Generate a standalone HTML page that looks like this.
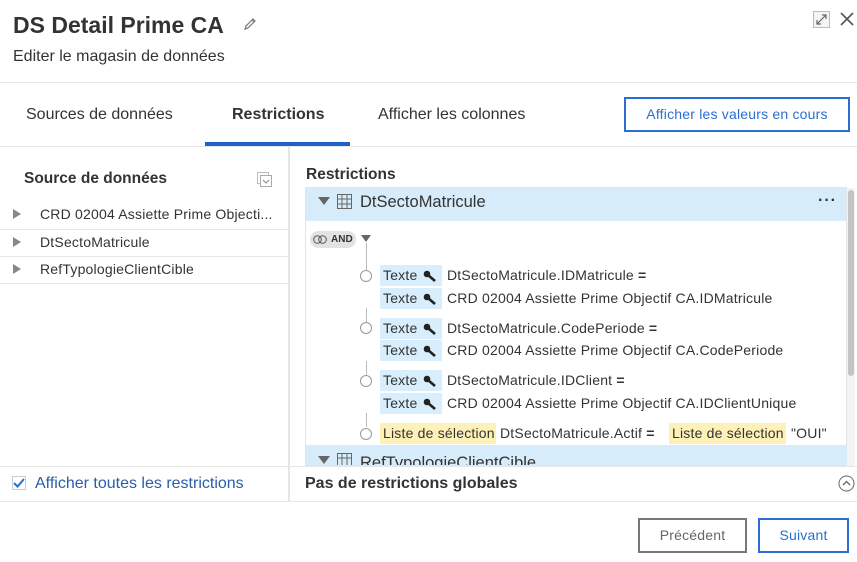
<!DOCTYPE html>
<html><head><meta charset="utf-8"><style>
*{margin:0;padding:0;box-sizing:border-box}
body{width:857px;height:562px;overflow:hidden;background:#fff;font-family:"Liberation Sans",sans-serif;color:#333;position:relative}
.a{position:absolute;white-space:nowrap}
.hl{position:absolute;height:1px;background:#e6e6e6}
.tag{position:absolute;height:21px;line-height:21px;padding-left:3px;font-size:14px;letter-spacing:0.2px;background:#d9eefc}
.tag.y{background:#fdf1b8}
.t{position:absolute;font-size:14px;letter-spacing:0.2px;line-height:21px;white-space:nowrap}
.circ{position:absolute;width:12px;height:12px;border:1px solid #999;border-radius:50%;background:#fff}
.vl{position:absolute;width:1px;background:#bbb;left:366px}
.key{display:inline-block;position:absolute;left:43px;top:5px;width:14px;height:12px}
.tri{position:absolute;width:0;height:0;border-top:5px solid transparent;border-bottom:5px solid transparent;border-left:8px solid #888}
</style></head><body>
<div class="a" style="left:13px;top:12px;font-size:23px;font-weight:bold;color:#333">DS Detail Prime CA</div>
<svg class="a" style="left:242px;top:16px" width="16" height="16" viewBox="0 0 16 16"><path d="M3 13 L4 10 L11 3 L13 5 L6 12 Z M10 4 L12 6" fill="none" stroke="#777" stroke-width="1.2"/></svg>
<div class="a" style="left:13px;top:48px;font-size:16px">Editer le magasin de données</div>
<svg class="a" style="left:813px;top:11px" width="17" height="17" viewBox="0 0 17 17"><rect x="0.5" y="0.5" width="16" height="16" fill="#f4f4f4" stroke="#bbb"/><path d="M4 13 L13 4 M9 4 H13 V8 M4 9 V13 H8" fill="none" stroke="#666" stroke-width="1.2"/></svg>
<svg class="a" style="left:839px;top:11px" width="16" height="16" viewBox="0 0 16 16"><path d="M2 2 L14 14 M14 2 L2 14" stroke="#555" stroke-width="1.6"/></svg>
<div class="hl" style="left:0;top:82px;width:857px"></div>
<div class="a" style="left:26px;top:106px;font-size:16px">Sources de données</div>
<div class="a" style="left:232px;top:106px;font-size:16px;font-weight:bold">Restrictions</div>
<div class="a" style="left:378px;top:106px;font-size:16px">Afficher les colonnes</div>
<div class="a" style="left:205px;top:142px;width:145px;height:4px;background:#1f62c5"></div>
<div class="a" style="left:624px;top:97px;width:226px;height:35px;border:2px solid #2a6fd0;color:#2a6fd0;font-size:14px;letter-spacing:0.2px;text-align:center;line-height:31px">Afficher les valeurs en cours</div>
<div class="hl" style="left:0;top:146px;width:857px"></div>
<div class="a" style="left:288px;top:147px;width:2px;height:355px;background:#e6e6e6"></div>
<div class="a" style="left:24px;top:170px;font-size:15.5px;font-weight:bold">Source de données</div>
<svg class="a" style="left:257px;top:172px" width="15" height="15" viewBox="0 0 15 15"><rect x="0.5" y="0.5" width="11" height="11" fill="none" stroke="#bbb"/><rect x="3.5" y="3.5" width="11" height="11" fill="#fff" stroke="#aaa"/><path d="M6 8 L9 11 L12 8" fill="none" stroke="#888"/></svg>
<div class="tri" style="left:13px;top:209px"></div><div class="a" style="left:40px;top:206px;font-size:14px;letter-spacing:0.2px">CRD 02004 Assiette Prime Objecti...</div>
<div class="hl" style="left:0;top:229px;width:288px"></div>
<div class="tri" style="left:13px;top:237px"></div><div class="a" style="left:40px;top:234px;font-size:14px;letter-spacing:0.2px">DtSectoMatricule</div>
<div class="hl" style="left:0;top:256px;width:288px"></div>
<div class="tri" style="left:13px;top:264px"></div><div class="a" style="left:40px;top:261px;font-size:14px;letter-spacing:0.2px">RefTypologieClientCible</div>
<div class="hl" style="left:0;top:283px;width:288px"></div>
<div class="hl" style="left:0;top:466px;width:288px"></div>
<svg class="a" style="left:12px;top:476px" width="14" height="14" viewBox="0 0 14 14"><rect x="0.5" y="0.5" width="13" height="13" fill="#fff" stroke="#ccc"/><path d="M2 7 L5.5 10.5 L12 3" fill="none" stroke="#2a6fd0" stroke-width="2"/></svg>
<div class="a" style="left:35px;top:475px;font-size:16px;color:#2a5ea8">Afficher toutes les restrictions</div>
<div class="a" style="left:306px;top:166px;font-size:15.5px;font-weight:bold">Restrictions</div>
<div class="a" style="left:305px;top:187px;width:542px;height:279px;border:1px solid #e4e4e4;overflow:hidden">
<div class="a" style="left:0;top:0;width:542px;height:33px;background:#d6ecfa"></div>
</div>
<div style="position:absolute;left:318px;top:197px;border-left:6px solid transparent;border-right:6px solid transparent;border-top:8px solid #666"></div>
<svg class="a" style="left:337px;top:194px" width="15" height="15" viewBox="0 0 15 15"><rect x="0.5" y="0.5" width="14" height="14" fill="none" stroke="#666"/><path d="M0 5 H15 M0 10 H15 M5 0 V15 M10 0 V15" stroke="#666"/></svg>
<div class="a" style="left:360px;top:193px;font-size:16.5px">DtSectoMatricule</div>
<div class="a" style="left:818px;top:192px;font-size:16px;font-weight:bold;letter-spacing:1px">···</div>
<div class="a" style="left:310px;top:231px;width:46px;height:17px;border-radius:9px;background:#e2e2e2;font-size:10px;font-weight:bold;line-height:17px;padding-left:21px">AND</div>
<svg class="a" style="left:313px;top:235px" width="15" height="9" viewBox="0 0 15 9"><circle cx="4.5" cy="4.5" r="3.8" fill="none" stroke="#555"/><circle cx="9.5" cy="4.5" r="3.8" fill="none" stroke="#555"/></svg>
<div style="position:absolute;left:361px;top:235px;border-left:5px solid transparent;border-right:5px solid transparent;border-top:7px solid #666"></div>
<div class="vl" style="top:243px;height:27px"></div>
<div class="vl" style="top:308px;height:14px"></div>
<div class="vl" style="top:361px;height:14px"></div>
<div class="vl" style="top:413px;height:14px"></div>

<div class="circ" style="left:360px;top:270px"></div>
<div class="tag" style="left:380px;top:265px;width:62px">Texte<svg class="key" viewBox="0 0 14 12"><circle cx="4" cy="4" r="3.3" fill="#222"/><path d="M5 5 L12 11" stroke="#222" stroke-width="2.6"/></svg></div>
<div class="t" style="left:447px;top:265px">DtSectoMatricule.IDMatricule <b>=</b></div>
<div class="tag" style="left:380px;top:288px;width:62px">Texte<svg class="key" viewBox="0 0 14 12"><circle cx="4" cy="4" r="3.3" fill="#222"/><path d="M5 5 L12 11" stroke="#222" stroke-width="2.6"/></svg></div>
<div class="t" style="left:447px;top:288px">CRD 02004 Assiette Prime Objectif CA.IDMatricule</div>

<div class="circ" style="left:360px;top:322px"></div>
<div class="tag" style="left:380px;top:318px;width:62px">Texte<svg class="key" viewBox="0 0 14 12"><circle cx="4" cy="4" r="3.3" fill="#222"/><path d="M5 5 L12 11" stroke="#222" stroke-width="2.6"/></svg></div>
<div class="t" style="left:447px;top:318px">DtSectoMatricule.CodePeriode <b>=</b></div>
<div class="tag" style="left:380px;top:340px;width:62px">Texte<svg class="key" viewBox="0 0 14 12"><circle cx="4" cy="4" r="3.3" fill="#222"/><path d="M5 5 L12 11" stroke="#222" stroke-width="2.6"/></svg></div>
<div class="t" style="left:447px;top:340px">CRD 02004 Assiette Prime Objectif CA.CodePeriode</div>

<div class="circ" style="left:360px;top:375px"></div>
<div class="tag" style="left:380px;top:370px;width:62px">Texte<svg class="key" viewBox="0 0 14 12"><circle cx="4" cy="4" r="3.3" fill="#222"/><path d="M5 5 L12 11" stroke="#222" stroke-width="2.6"/></svg></div>
<div class="t" style="left:447px;top:370px">DtSectoMatricule.IDClient <b>=</b></div>
<div class="tag" style="left:380px;top:393px;width:62px">Texte<svg class="key" viewBox="0 0 14 12"><circle cx="4" cy="4" r="3.3" fill="#222"/><path d="M5 5 L12 11" stroke="#222" stroke-width="2.6"/></svg></div>
<div class="t" style="left:447px;top:393px">CRD 02004 Assiette Prime Objectif CA.IDClientUnique</div>

<div class="circ" style="left:360px;top:428px"></div>
<div class="tag y" style="left:380px;top:423px;width:116px">Liste de sélection</div>
<div class="t" style="left:500px;top:423px">DtSectoMatricule.Actif <b>=</b></div>
<div class="tag y" style="left:669px;top:423px;width:117px">Liste de sélection</div>
<div class="t" style="left:791px;top:423px">"OUI"</div>
<div class="a" style="left:306px;top:445px;width:541px;height:20px;background:#d6ecfa;overflow:hidden">
<div style="position:absolute;left:12px;top:11px;border-left:6px solid transparent;border-right:6px solid transparent;border-top:8px solid #666"></div>
<svg class="a" style="left:31px;top:8px" width="15" height="15" viewBox="0 0 15 15"><rect x="0.5" y="0.5" width="14" height="14" fill="none" stroke="#666"/><path d="M0 5 H15 M5 0 V15 M10 0 V15" stroke="#666"/></svg>
<div class="a" style="left:54px;top:9px;font-size:16.5px">RefTypologieClientCible</div></div>
<div class="a" style="left:847px;top:188px;width:8px;height:278px;background:#f3f3f3"></div>
<div class="a" style="left:848px;top:190px;width:6px;height:186px;background:#c4c4c4;border-radius:3px"></div>
<div class="hl" style="left:290px;top:466px;width:567px"></div>
<div class="a" style="left:305px;top:475px;font-size:16px;font-weight:bold">Pas de restrictions globales</div>
<svg class="a" style="left:838px;top:475px" width="17" height="17" viewBox="0 0 17 17"><circle cx="8.5" cy="8.5" r="7.5" fill="none" stroke="#666"/><path d="M5 10 L8.5 6.5 L12 10" fill="none" stroke="#666" stroke-width="1.3"/></svg>
<div class="hl" style="left:0;top:501px;width:857px"></div>
<div class="a" style="left:638px;top:518px;width:109px;height:35px;border:2px solid #777;color:#666;font-size:14px;letter-spacing:0.2px;text-align:center;line-height:31px">Précédent</div>
<div class="a" style="left:758px;top:518px;width:91px;height:35px;border:2px solid #2a6fd0;color:#2a6fd0;font-size:14px;letter-spacing:0.2px;text-align:center;line-height:31px">Suivant</div>
</body></html>
